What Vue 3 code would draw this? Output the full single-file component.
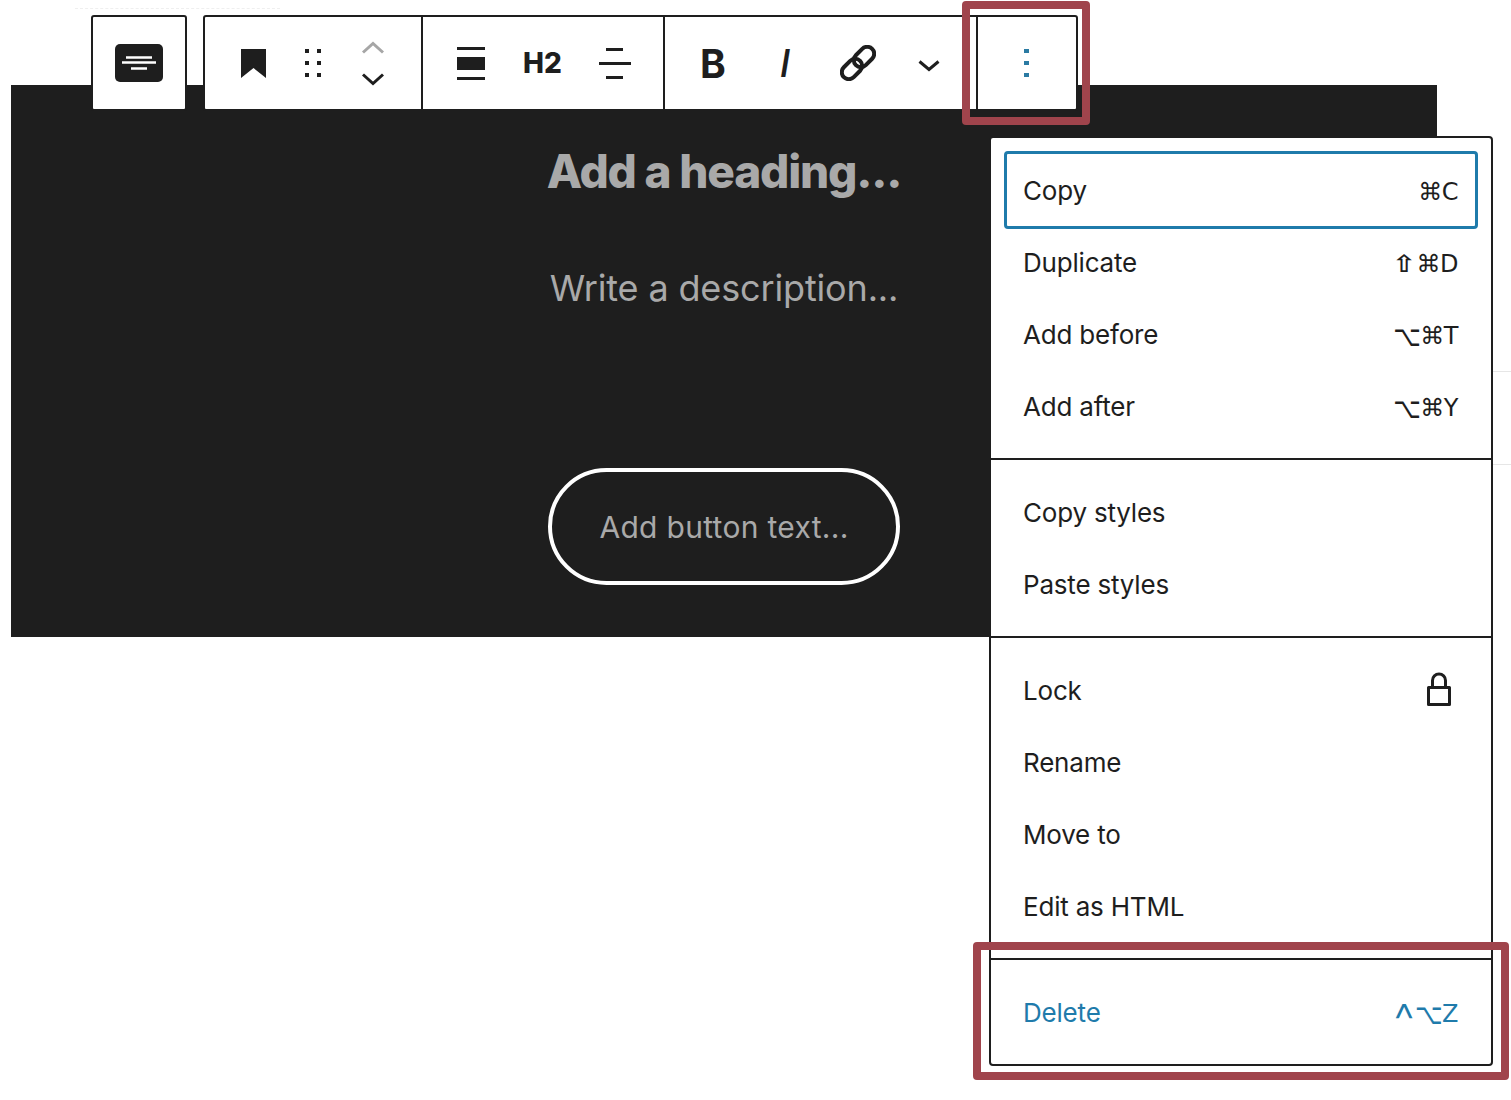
<script setup>
const groups = [
  [
    { label: 'Copy', keys: '⌘C', focused: true },
    { label: 'Duplicate', keys: '⇧⌘D' },
    { label: 'Add before', keys: '⌥⌘T' },
    { label: 'Add after', keys: '⌥⌘Y' }
  ],
  [{ label: 'Copy styles' }, { label: 'Paste styles' }],
  [
    { label: 'Lock', lock: true },
    { label: 'Rename' },
    { label: 'Move to' },
    { label: 'Edit as HTML' }
  ],
  [{ label: 'Delete', keys: '^⌥Z', danger: true }]
]

// the mac modifier glyphs need their own sizing to match the reference
const keyClass = (ch) => ({ '⇧': 'k-shift', '^': 'k-ctrl', '⌥': 'k-opt' })[ch] || ''
</script>

<template>
  <div class="page">
    <div class="hero">
      <h2 class="hero-title">Add a heading...</h2>
      <p class="hero-desc">Write a description...</p>
      <div class="hero-btn">Add button text...</div>
    </div>

    <div class="toolbar">
      <div class="tb-box tb-type">
        <svg width="48" height="38" viewBox="0 0 48 38">
          <rect width="48" height="38" rx="5" fill="#1e1e1e" />
          <path d="M7 18.5h34M11 13.5h26M16 24.5h16" stroke="#fff" stroke-width="2.4" fill="none" />
        </svg>
      </div>

      <div class="tb-box tb-main">
        <div class="tb-group tb-g1">
          <svg class="ico-bookmark" width="25" height="29" viewBox="0 0 25 29">
            <path d="M0 0h25v29L12.5 19 0 29z" fill="#1e1e1e" />
          </svg>
          <svg class="ico-drag" width="16" height="28" viewBox="0 0 16 28">
            <path d="M0 0h4v4H0zM12 0h4v4h-4zM0 12h4v4H0zM12 12h4v4h-4zM0 24h4v4H0zM12 24h4v4h-4z" fill="#1e1e1e" />
          </svg>
          <div class="movers">
            <svg width="24" height="13" viewBox="0 0 24 13">
              <path d="M2 11.5 12 2.500l10 9" stroke="#a6a6a6" stroke-width="3" fill="none" />
            </svg>
            <svg width="24" height="13" viewBox="0 0 24 13">
              <path d="M2 1.500l10 9 10-9" stroke="#1e1e1e" stroke-width="3" fill="none" />
            </svg>
          </div>
        </div>

        <div class="tb-group tb-g2">
          <svg width="28" height="33" viewBox="0 0 28 33">
            <path d="M0 0h28v3H0zM0 10h28v13H0zM0 30h28v3H0z" fill="#1e1e1e" />
          </svg>
          <span class="tb-h2">H2</span>
          <svg width="32" height="31" viewBox="0 0 32 31">
            <path d="M7 0h17v3H7zM0 14h32v3H0zM7 28h17v3H7z" fill="#1e1e1e" />
          </svg>
        </div>

        <div class="tb-group tb-g3">
          <span class="tb-bold">B</span>
          <span class="tb-italic">I</span>
          <svg class="ico-link" width="36" height="36" viewBox="0 0 36 36">
            <g transform="rotate(-45 18 18)" fill="none" stroke="#1e1e1e" stroke-width="4">
              <rect x="-2" y="11" width="23" height="14" rx="7" />
              <rect x="15" y="11" width="23" height="14" rx="7" />
            </g>
          </svg>
          <svg class="ico-more" width="22" height="12" viewBox="0 0 22 12">
            <path d="M1.500 1.500l9.500 8 9.500-8" stroke="#1e1e1e" stroke-width="3" fill="none" />
          </svg>
        </div>

        <div class="tb-group tb-g4">
          <svg width="5" height="28" viewBox="0 0 5 28">
            <path d="M0 0h5v4H0zM0 12h5v4H0zM0 24h5v4H0z" fill="#2b7ba3" />
          </svg>
        </div>
      </div>
    </div>

    <div class="menu">
      <div v-for="(group, i) in groups" :key="i" class="menu-group">
        <div
          v-for="item in group"
          :key="item.label"
          class="menu-item"
          :class="{ focused: item.focused, danger: item.danger }"
        >
          <span>{{ item.label }}</span>
          <span v-if="item.keys" class="keys">
            <span v-for="ch in item.keys" :key="ch" :class="keyClass(ch)">{{ ch }}</span>
          </span>
          <svg v-if="item.lock" class="lock" width="26" height="35" viewBox="0 0 26 35">
            <path d="M2.500 15.500h21v17h-21z" fill="none" stroke="#1e1e1e" stroke-width="3" stroke-linejoin="round" />
            <path d="M6.500 15V8.500a6.500 6.500 0 0 1 13 0V15" fill="none" stroke="#1e1e1e" stroke-width="3" />
          </svg>
        </div>
      </div>
    </div>

    <div class="mark mark-top"></div>
    <div class="mark mark-bottom"></div>

    <div class="stray stray-a"></div>
    <div class="stray stray-b"></div>
    <div class="stray stray-dash"></div>
  </div>
</template>

<style>
html,
body {
  margin: 0;
  background: #fff;
}
</style>

<style scoped>
.page {
  position: relative;
  width: 1511px;
  height: 1100px;
  overflow: hidden;
  background: #fff;
  font-family: Inter, 'Liberation Sans', sans-serif;
  color: #1e1e1e;
}

.hero {
  box-sizing: border-box;
  width: 1426px;
  height: 552px;
  margin-left: 11px;
  position: relative;
  top: 85px;
  padding-top: 56px;
  background: #1e1e1e;
  display: flex;
  flex-direction: column;
  align-items: center;
  color: #a9a9a9;
}

.hero-title {
  margin: 0;
  font-size: 46px;
  line-height: 60px;
  font-weight: 800;
  letter-spacing: -1.2px;
}

.hero-desc {
  margin: 57px 0 0;
  font-size: 36px;
  line-height: 60px;
  letter-spacing: -0.15px;
}

.hero-btn {
  box-sizing: border-box;
  width: 352px;
  height: 117px;
  margin-top: 150px;
  border: 4px solid #fff;
  border-radius: 59px;
  display: flex;
  align-items: center;
  justify-content: center;
  font-size: 30px;
  letter-spacing: 0.3px;
}

.toolbar {
  position: absolute;
  left: 91px;
  top: 15px;
  display: flex;
  gap: 16px;
}

.tb-box {
  box-sizing: border-box;
  height: 96px;
  background: #fff;
  border: 2px solid #1e1e1e;
  border-radius: 3px;
  display: flex;
}

.tb-type {
  width: 96px;
  align-items: center;
  justify-content: center;
}

.tb-main {
  width: 875px;
}

.tb-group {
  box-sizing: border-box;
  display: flex;
  align-items: center;
  border-right: 2px solid #1e1e1e;
}

.tb-g1 {
  width: 218px;
  padding-left: 36px;
}

.ico-drag {
  margin-left: 39px;
}

.movers {
  margin-left: 40px;
  display: flex;
  flex-direction: column;
  gap: 19px;
}

.tb-g2 {
  width: 242px;
  padding-left: 34px;
  gap: 38px;
}

.tb-g2 svg:last-child {
  margin-left: -1px;
}

.tb-h2 {
  font-size: 28px;
  font-weight: 800;
  line-height: 1;
}

.tb-g3 {
  width: 313px;
  padding-left: 35px;
}

.tb-bold {
  font-size: 39px;
  font-weight: 700;
  line-height: 1;
}

.tb-italic {
  margin-left: 54px;
  font-size: 38px;
  font-weight: 500;
  font-style: italic;
  line-height: 1;
}

.ico-link {
  margin-left: 50px;
}

.ico-more {
  margin-left: 42px;
  margin-top: 6px;
}

.tb-g4 {
  flex: 1;
  justify-content: center;
  padding-right: 2px;
  border-right: 0;
}

.menu {
  position: absolute;
  left: 989px;
  top: 136px;
  box-sizing: border-box;
  width: 504px;
  background: #fff;
  border: 2px solid #1e1e1e;
  border-radius: 4px;
}

.menu-group {
  box-sizing: border-box;
  padding: 16px 12px 16px 13px;
  border-bottom: 2px solid #1e1e1e;
}

.menu-group:last-child {
  border-bottom: 0;
}

.menu-item {
  box-sizing: border-box;
  height: 72px;
  padding: 1px 21px 0 19px;
  display: flex;
  align-items: center;
  justify-content: space-between;
  font-size: 26px;
  letter-spacing: -0.2px;
  border-radius: 4px;
}

.menu-item.focused {
  height: 78px;
  margin: -3px 1px -3px 0;
  border: 3px solid #1f7bab;
  padding: 1px 17px 0 16px;
}

.menu-item.danger {
  color: #1f7bab;
}

.keys {
  display: inline-flex;
  align-items: baseline;
  padding-top: 2px;
  font-family: 'DejaVu Sans', Inter, sans-serif;
  font-size: 24px;
  letter-spacing: -0.5px;
}

.k-shift {
  display: inline-block;
  margin-right: 3px;
  font-weight: 700;
  transform: scaleX(1.2);
}

.k-ctrl {
  display: inline-block;
  width: 28px;
  margin: 0 -3px 0 -4px;
  font-family: Inter, sans-serif;
  font-size: 46px;
  font-weight: 300;
  line-height: 0;
  text-align: center;
  position: relative;
  top: 14px;
}

.k-opt {
  display: inline-block;
  transform: scaleY(1.2);
}

.lock {
  margin-right: 6px;
  margin-bottom: 3px;
}

.mark {
  position: absolute;
  box-sizing: border-box;
  border: 8px solid #a0444c;
  border-radius: 4px;
  pointer-events: none;
}

.mark-top {
  left: 962px;
  top: 1px;
  width: 128px;
  height: 124px;
}

.mark-bottom {
  left: 973px;
  top: 942px;
  width: 536px;
  height: 138px;
}

.stray {
  position: absolute;
  left: 1493px;
  width: 18px;
  height: 1px;
  background: #e6e6e6;
}

.stray-a {
  top: 371px;
}

.stray-b {
  top: 464px;
}

.stray-dash {
  left: 75px;
  top: 8px;
  width: 205px;
  border-top: 1px dashed #efefef;
  background: none;
}
</style>
